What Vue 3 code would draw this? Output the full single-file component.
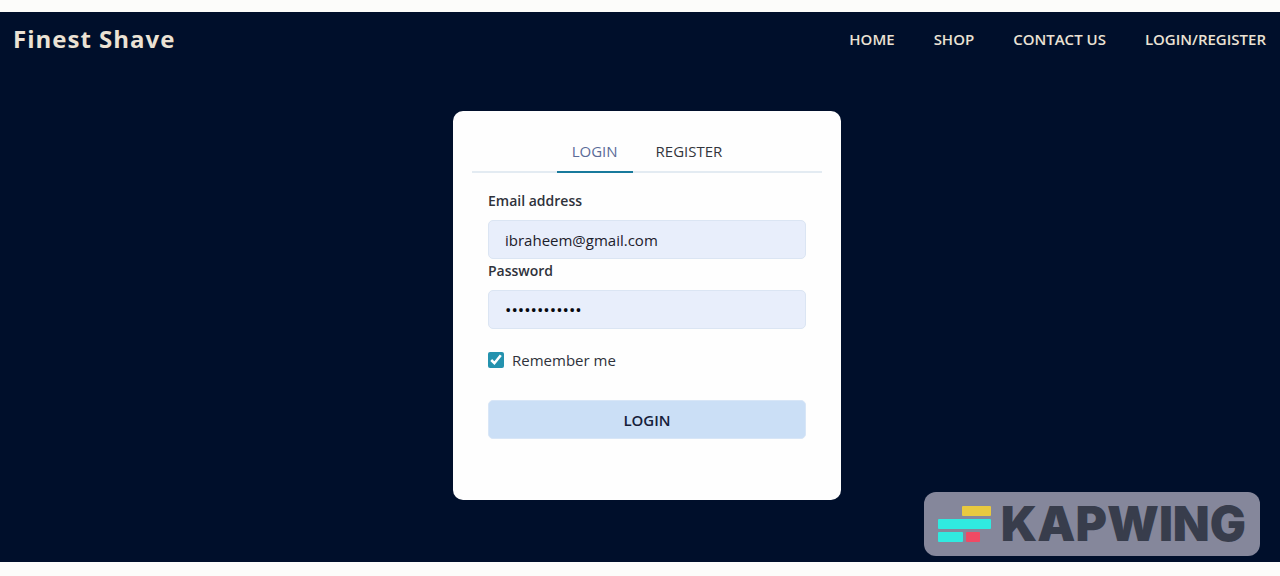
<script setup>
import { ref } from 'vue'

const links = ['HOME', 'SHOP', 'CONTACT US', 'LOGIN/REGISTER']
const tab = ref('login')
const email = ref('ibraheem@gmail.com')
const password = ref('shavingcream')
const remember = ref(true)
</script>

<template>
  <div class="page">
    <header class="header">
      <a class="brand" href="#">Finest Shave</a>
      <nav class="nav">
        <a v-for="link in links" :key="link" href="#">{{ link }}</a>
      </nav>
    </header>

    <main class="content">
      <section class="card">
        <div class="tabs" role="tablist">
          <button type="button" role="tab" class="tab" :class="{ active: tab === 'login' }"
            :aria-selected="tab === 'login'" @click="tab = 'login'">LOGIN</button>
          <button type="button" role="tab" class="tab" :class="{ active: tab === 'register' }"
            :aria-selected="tab === 'register'" @click="tab = 'register'">REGISTER</button>
        </div>
        <form class="form" @submit.prevent>
          <label class="label" for="email">Email address</label>
          <input id="email" v-model="email" class="field" type="email">
          <label class="label" for="password">Password</label>
          <input id="password" v-model="password" class="field password" type="password">
          <div class="remember">
            <input id="remember" v-model="remember" class="check" type="checkbox">
            <label for="remember">Remember me</label>
          </div>
          <button class="submit" type="submit">LOGIN</button>
        </form>
      </section>
    </main>

    <div class="badge">
      <svg class="mark" viewBox="0 0 53 36" aria-hidden="true">
        <rect x="24" y="0" width="29" height="10" rx="1" fill="#e8c93f" />
        <rect x="0" y="13" width="53" height="10" rx="1" fill="#30eae0" />
        <rect x="0" y="26" width="25" height="10" rx="1" fill="#30eae0" />
        <rect x="28" y="26" width="14" height="10" rx="1" fill="#f04a64" />
      </svg>
      <span class="word">KAPWING</span>
    </div>
  </div>
</template>

<style>
body {
  margin: 0;
  background: #fcfcfa;
}
</style>

<style scoped>
.page,
.page * {
  box-sizing: border-box;
}

.page {
  position: relative;
  display: flow-root;
  min-height: calc(100vh - 26px);
  margin: 12px 0 14px;
  background: #000f2b;
  color: #2f323b;
  font: 15px/24px "Open Sans", "Noto Sans", sans-serif;
}

.header {
  display: flex;
  align-items: center;
  justify-content: space-between;
  height: 54px;
  padding: 0 14px 0 13px;
}

.header a {
  color: #ebe2d4;
  text-decoration: none;
}

.brand {
  font-size: 24px;
  font-weight: 700;
  letter-spacing: 1px;
}

.nav {
  display: flex;
  gap: 39px;
  font-weight: 600;
  line-height: 22px;
}

.content {
  display: flex;
  justify-content: center;
  padding: 45px 0 61px 14px;
}

.card {
  width: 388px;
  padding: 20px 19px 61px;
  border-radius: 10px;
  background: #fefefe;
}

.tabs {
  display: flex;
  justify-content: center;
  gap: 8px;
  border-bottom: 2px solid #e3ebf2;
}

.tab {
  margin-bottom: -2px;
  padding: 8px 15px;
  border: 0;
  border-bottom: 2px solid transparent;
  background: none;
  color: #33353c;
  font: inherit;
}

.tab.active {
  border-bottom-color: #187a9c;
  color: #5a6b98;
}

.form {
  display: flex;
  flex-direction: column;
  padding: 16px 16px 0;
}

.label {
  font-size: 14px;
  font-weight: 600;
}

.field {
  width: 100%;
  height: 39px;
  margin: 7px 0 0;
  padding: 0 16px;
  border: 1px solid #dbe5f3;
  border-radius: 5px;
  background: #e8eefb;
  color: #1c202b;
  font: inherit;
  outline: 0;
}

.password {
  color: #05070d;
  font-size: 17px;
}

.remember {
  display: flex;
  align-items: center;
  gap: 8px;
  margin: 19px 0 28px;
}

.check {
  width: 16px;
  height: 16px;
  margin: 0;
  accent-color: #2492ae;
}

.submit {
  height: 39px;
  border: 1px solid #d8e6f7;
  border-radius: 5px;
  background: #cbdff6;
  color: #15203a;
  font: inherit;
  font-weight: 600;
}

.badge {
  position: absolute;
  right: 20px;
  bottom: 6px;
  display: flex;
  align-items: center;
  gap: 10px;
  height: 64px;
  padding: 0 14px;
  border-radius: 12px;
  background: #85879b;
}

.mark {
  width: 53px;
  height: 36px;
}

.word {
  color: #383d4c;
  font: 900 48px/64px Inter, sans-serif;
}
</style>
